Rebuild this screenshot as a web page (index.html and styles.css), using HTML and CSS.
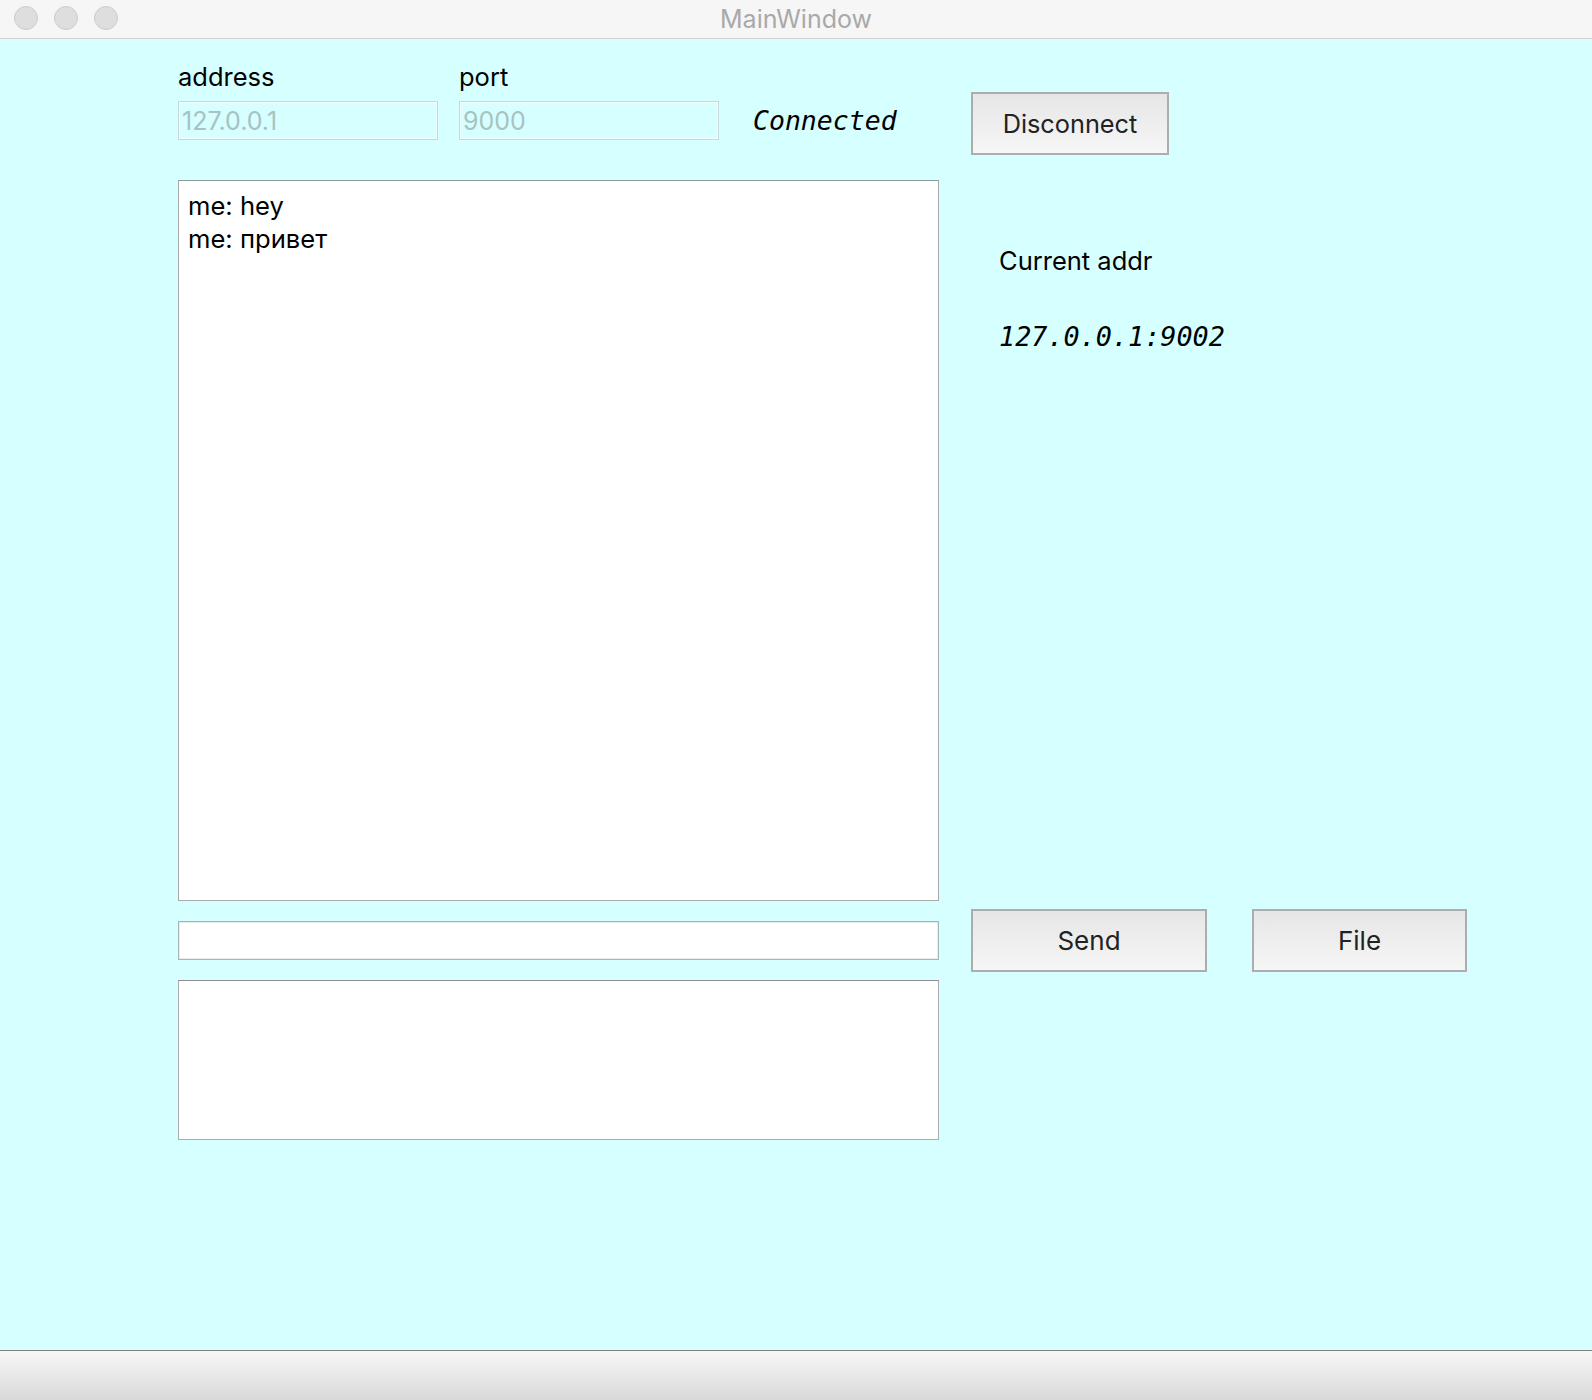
FILE: index.html
```html
<!DOCTYPE html>
<html>
<head>
<meta charset="utf-8">
<title>MainWindow</title>
<link rel="stylesheet" href="styles.css">
</head>
<body>
<div class="window">
  <div class="titlebar">
    <div class="lights">
      <span class="light"></span>
      <span class="light"></span>
      <span class="light"></span>
    </div>
    <div class="title">MainWindow</div>
  </div>
  <div class="content">
    <div class="top-row">
      <div class="field">
        <div class="label">address</div>
        <input class="line-input" type="text" placeholder="127.0.0.1">
      </div>
      <div class="field">
        <div class="label">port</div>
        <input class="line-input" type="text" placeholder="9000">
      </div>
      <div class="status">Connected</div>
      <button class="btn btn-disconnect">Disconnect</button>
    </div>
    <div class="main-grid">
      <div class="chat-box">
        <div class="msg">me: hey</div>
        <div class="msg">me: привет</div>
      </div>
      <div class="info">
        <div class="info-label">Current addr</div>
        <div class="info-value">127.0.0.1:9002</div>
      </div>
      <div class="msg-input-wrap">
        <input class="msg-input" type="text">
      </div>
      <div class="actions">
        <button class="btn btn-send">Send</button>
        <button class="btn btn-file">File</button>
      </div>
      <div class="file-box"></div>
    </div>
  </div>
  <div class="statusbar"></div>
</div>
</body>
</html>
```
FILE: styles.css
```css
html, body {
  margin: 0;
  padding: 0;
}
body {
  font-family: "Inter", "Liberation Sans", sans-serif;
  color: #000;
}
.window {
  width: 1592px;
  height: 1400px;
  display: flex;
  flex-direction: column;
  overflow: hidden;
}
.titlebar {
  height: 38px;
  background: #f6f6f6;
  border-bottom: 1px solid #d2d2d2;
  display: flex;
  align-items: center;
  justify-content: center;
  position: relative;
  flex: none;
}
.lights {
  position: absolute;
  left: 14px;
  top: 6px;
  display: flex;
  gap: 16px;
}
.light {
  width: 22px;
  height: 22px;
  border-radius: 50%;
  background: #dedede;
  border: 1px solid #cdcdcd;
}
.title {
  font-size: 25px;
  color: #a9a9a9;
  line-height: 38px;
}
.content {
  flex: 1;
  background: #d6ffff;
  padding-left: 178px;
}
.top-row {
  display: flex;
  align-items: flex-start;
  margin-top: 23px;
  height: 95px;
}
.field {
  width: 260px;
  margin-right: 21px;
}
.label {
  font-size: 25.5px;
  line-height: 30px;
  height: 30px;
}
.line-input {
  display: block;
  box-sizing: border-box;
  margin-top: 9px;
  width: 260px;
  height: 39px;
  background: transparent;
  border: 1px solid #c6d8d8;
  box-shadow: inset 0 0 0 1px #f4ffff;
  padding: 0 3px;
  font-family: "Inter", "Liberation Sans", sans-serif;
  font-size: 25px;
  outline: none;
}
.line-input::placeholder {
  color: #a8c2c2;
}
.status {
  font-family: "DejaVu Sans Mono", monospace;
  font-style: italic;
  font-size: 26.5px;
  line-height: 30px;
  margin-top: 44px;
  margin-left: 13px;
  width: 218px;
}
.btn {
  box-sizing: border-box;
  border: 2px solid #adadad;
  background: linear-gradient(#e6e6e6, #f6f6f6);
  font-family: "Inter", "Liberation Sans", sans-serif;
  font-size: 26px;
  color: #222;
  padding: 0;
  height: 63px;
}
.btn-disconnect {
  width: 198px;
  margin-top: 30px;
  font-size: 25.3px;
}
.main-grid {
  display: grid;
  grid-template-columns: 761px auto;
  grid-template-rows: 721px 63px 160px;
  column-gap: 32px;
  row-gap: 8px;
  margin-top: 23px;
}
.chat-box {
  box-sizing: border-box;
  background: #fff;
  border: 1px solid #a9a9a9;
  border-top-color: #8e9a9a;
  padding: 9px 9px;
}
.msg {
  font-size: 25.6px;
  line-height: 32.5px;
}
.info {
  padding-left: 28px;
  padding-top: 66px;
}
.info-label {
  font-size: 25.5px;
  line-height: 30px;
}
.info-value {
  font-family: "DejaVu Sans Mono", monospace;
  font-style: italic;
  font-size: 26.8px;
  line-height: 30px;
  margin-top: 46px;
}
.msg-input-wrap {
  display: flex;
  align-items: center;
}
.msg-input {
  box-sizing: border-box;
  width: 761px;
  height: 39px;
  background: #fff;
  border: 1px solid #a6b6b6;
  box-shadow: inset 0 0 0 1px #ebebeb;
  outline: none;
  padding: 0 6px;
  font-size: 24px;
}
.actions {
  display: flex;
  gap: 45px;
}
.btn-send {
  width: 236px;
}
.btn-file {
  width: 215px;
}
.file-box {
  box-sizing: border-box;
  background: #fff;
  border: 1px solid #acacac;
  border-top-color: #8c8c8c;
}
.statusbar {
  flex: none;
  height: 49px;
  border-top: 1px solid #7f7f7f;
  background: linear-gradient(#f7f7f7, #d8d8d8);
}
```
